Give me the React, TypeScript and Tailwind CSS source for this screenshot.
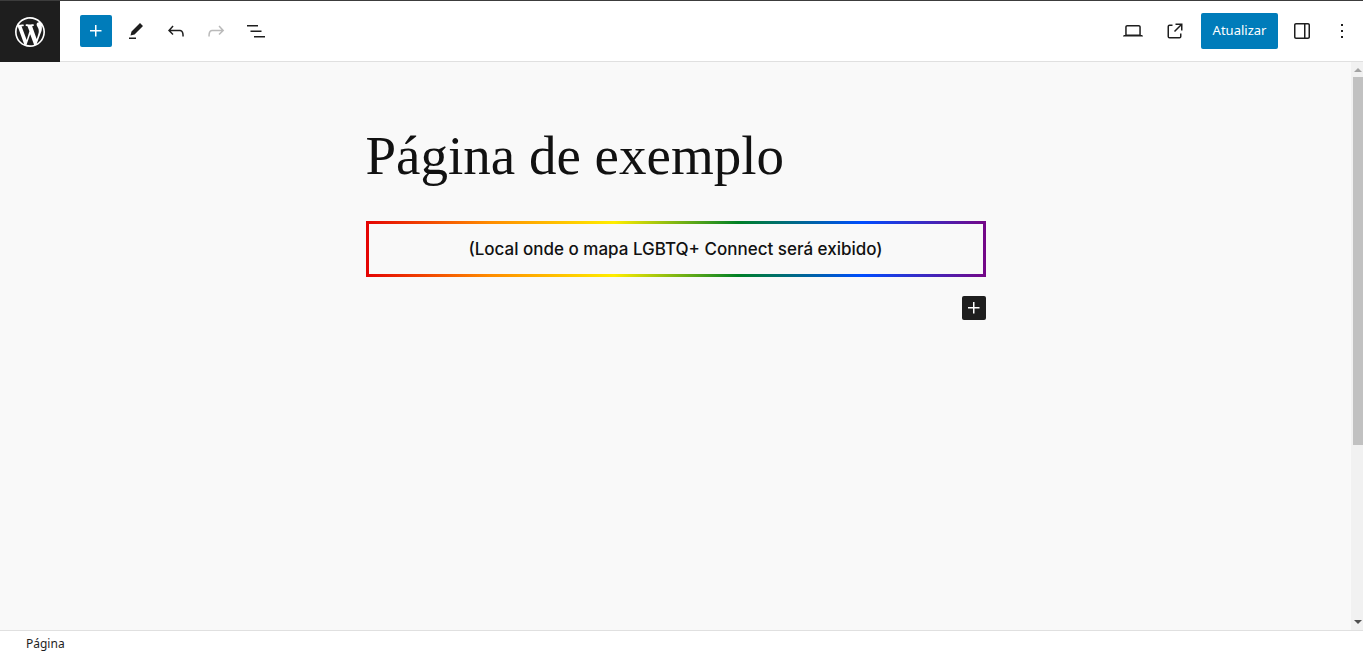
import type { ReactNode } from "react";

const paths = {
  logo: "M20 10c0-5.51-4.49-10-10-10C4.48 0 0 4.49 0 10c0 5.52 4.48 10 10 10 5.51 0 10-4.48 10-10zM7.78 15.37L4.37 6.22c.55-.02 1.17-.08 1.17-.08.5-.06.44-1.13-.06-1.11 0 0-1.45.11-2.37.11-.18 0-.37 0-.58-.01C4.12 2.69 6.87 1.11 10 1.11c2.33 0 4.45.87 6.05 2.34-.68-.11-1.65.39-1.65 1.58 0 .74.45 1.36.9 2.1.35.61.55 1.36.55 2.46 0 1.49-1.4 5-1.4 5l-3.03-8.37c.54-.02.82-.17.82-.17.5-.05.44-1.25-.06-1.22 0 0-1.44.12-2.38.12-.87 0-2.33-.12-2.33-.12-.5-.03-.56 1.2-.06 1.22l.92.08 1.26 3.41zM17.41 10c.24-.64.74-1.87.43-4.25.7 1.29 1.05 2.71 1.05 4.25 0 3.29-1.73 6.24-4.4 7.78.97-2.59 1.94-5.2 2.92-7.78zM6.1 18.09C3.12 16.65 1.11 13.53 1.11 10c0-1.3.23-2.48.72-3.59C3.25 10.3 4.67 14.2 6.1 18.09zm4.03-6.63l2.58 6.98c-.86.29-1.76.45-2.71.45-.79 0-1.57-.11-2.29-.33.81-2.38 1.62-4.74 2.42-7.1z",
  plus: "M11 12.5V17.5H12.5V12.5H17.5V11H12.5V6H11V11H6V12.5H11Z",
  pencil: "m19 7-3-3-8.5 8.5-1 4 4-1L19 7Zm-7 11.5H5V20h7v-1.5Z",
  undo: "M18.3 11.7c-.6-.6-1.4-.9-2.3-.9H6.7l2.9-3.3-1.1-1-4.5 5L8.5 16l1-1-2.7-2.7H16c.5 0 .9.2 1.3.5 1 1 1 3.4 1 4.5v.3h1.5v-.2c0-1.5 0-4.3-1.5-5.7z",
  redo: "M15.6 6.5l-1.1 1 2.9 3.3H8c-.9 0-1.7.3-2.3.9-1.4 1.5-1.4 4.2-1.4 5.6v.2h1.5v-.3c0-1.1 0-3.5 1-4.5.3-.3.7-.5 1.3-.5h9.2L14.5 15l1.1 1.1 4.6-4.6-4.6-5z",
  list: "M3 6h11v1.5H3V6Zm3.5 5.5h11V13h-11v-1.5ZM21 17H10v1.5h11V17Z",
  desktop: "M20.5 16h-.7V8c0-1.1-.9-2-2-2H6.2c-1.1 0-2 .9-2 2v8h-.7c-.8 0-1.5.7-1.5 1.5h20c0-.8-.7-1.5-1.5-1.5zM5.7 8c0-.3.2-.5.5-.5h11.6c.3 0 .5.2.5.5v7.6H5.7V8z",
  external: "M19.5 4.5h-7V6h4.44l-5.97 5.97 1.06 1.06L18 7.06v4.44h1.5v-7Zm-13 1a2 2 0 0 0-2 2v10a2 2 0 0 0 2 2h10a2 2 0 0 0 2-2v-3H17v3a.5.5 0 0 1-.5.5h-10a.5.5 0 0 1-.5-.5v-10a.5.5 0 0 1 .5-.5h3V5.5h-3Z",
  drawer: "M18 4H6c-1.1 0-2 .9-2 2v12c0 1.1.9 2 2 2h12c1.1 0 2-.9 2-2V6c0-1.1-.9-2-2-2zm-4 14.5H6c-.3 0-.5-.2-.5-.5V6c0-.3.2-.5.5-.5h8v13zm4.5-.5c0 .3-.2.5-.5.5h-2.5v-13H18c.3 0 .5.2.5.5v12z",
  more: "M13 19h-2v-2h2v2zm0-6h-2v-2h2v2zm0-6h-2V5h2v2z",
};

function Icon({ d }: { d: string }) {
  return (
    <svg viewBox="0 0 24 24" className="size-6 fill-current" aria-hidden="true">
      <path d={d} />
    </svg>
  );
}

function ToolButton({ label, disabled, children }: { label: string; disabled?: boolean; children: ReactNode }) {
  return (
    <button
      type="button"
      aria-label={label}
      disabled={disabled}
      className="flex size-8 items-center justify-center rounded-xs disabled:opacity-30"
    >
      {children}
    </button>
  );
}

function Header() {
  return (
    <header className="flex h-[62px] shrink-0 border-t border-t-[#3c3c3c] bg-white">
      <a href="#paginas" aria-label="Ver páginas" className="flex w-[60px] items-center justify-center bg-[#1e1e1e] text-white">
        <svg viewBox="-2 -2 24 24" className="size-9 fill-current" aria-hidden="true">
          <path d={paths.logo} />
        </svg>
      </a>
      <div className="flex grow items-center justify-between border-b border-[#e0e0e0] pr-[5px] pl-5">
        <div className="flex gap-2">
          <button type="button" aria-label="Adicionar bloco" className="flex size-8 items-center justify-center rounded-xs bg-[#007cba] text-white">
            <Icon d={paths.plus} />
          </button>
          <ToolButton label="Ferramentas"><Icon d={paths.pencil} /></ToolButton>
          <ToolButton label="Desfazer"><Icon d={paths.undo} /></ToolButton>
          <ToolButton label="Refazer" disabled><Icon d={paths.redo} /></ToolButton>
          <ToolButton label="Visão geral do documento"><Icon d={paths.list} /></ToolButton>
        </div>
        <div className="flex items-center gap-2">
          <div className="flex gap-[10px] pr-[2px]">
            <ToolButton label="Visualizar"><Icon d={paths.desktop} /></ToolButton>
            <a href="#ver" aria-label="Ver página" className="flex size-8 items-center justify-center">
              <Icon d={paths.external} />
            </a>
          </div>
          <button type="button" className="h-9 w-[77px] rounded-xs bg-[#007cba] text-[13px] text-white">
            Atualizar
          </button>
          <ToolButton label="Configurações"><Icon d={paths.drawer} /></ToolButton>
          <ToolButton label="Opções"><Icon d={paths.more} /></ToolButton>
        </div>
      </div>
    </header>
  );
}

function ScrollTrack() {
  return (
    <div className="flex w-3 shrink-0 flex-col items-end bg-[#f1f1f1] pl-[2px]" aria-hidden="true">
      <svg viewBox="0 0 10 15" className="h-[15px] w-[10px] shrink-0 fill-[#a3a3a3]">
        <path d="M5 6L9 10H1Z" />
      </svg>
      <div className="w-[10px] grow-[368] basis-0 bg-[#c1c1c1]" />
      <div className="grow-[170] basis-0" />
      <svg viewBox="0 0 10 15" className="h-[15px] w-[10px] shrink-0 fill-[#505050]">
        <path d="M5 9L9 5H1Z" />
      </svg>
    </div>
  );
}

export default function App() {
  return (
    <div className="flex h-screen flex-col bg-white font-['Noto_Sans',sans-serif] text-[#1e1e1e]">
      <Header />
      <div className="flex min-h-0 grow bg-[#f9f9f9]">
        <main className="min-w-0 grow overflow-hidden px-6 pt-[62px]">
          <div className="mx-auto flex max-w-[620px] flex-col">
            <h1 className="font-['Liberation_Serif',serif] text-[55px] leading-[64px] text-[#111111]">
              Página de exemplo
            </h1>
            <div className="mt-[33px] bg-linear-[90deg,#e40303_0%,#ff8c00_20%,#ffed00_40%,#008026_60%,#004dff_80%,#750787_100%] p-[3px]">
              <p className="bg-[#f9f9f9] py-[12px] text-center font-['Inter',sans-serif] text-[17px] leading-[26px] font-medium text-[#111111]">
                (Local onde o mapa LGBTQ+ Connect será exibido)
              </p>
            </div>
            <button type="button" aria-label="Adicionar bloco" className="mt-[19px] flex size-6 items-center justify-center self-end rounded-xs bg-[#1e1e1e] text-white">
              <Icon d={paths.plus} />
            </button>
          </div>
        </main>
        <ScrollTrack />
      </div>
      <footer className="flex h-[25px] shrink-0 items-center border-t border-[#e0e0e0] px-[26px] pt-[2px] text-xs">
        Página
      </footer>
    </div>
  );
}
